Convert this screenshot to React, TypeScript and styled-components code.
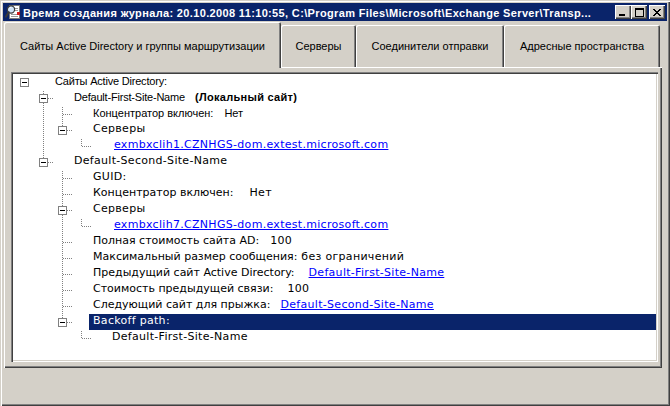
import React from 'react';
import styled, { createGlobalStyle } from 'styled-components';

const GlobalStyle = createGlobalStyle`
  html, body { margin: 0; padding: 0; background: #d4d0c8; }
  body { width: 670px; height: 406px; overflow: hidden; font-family: "Liberation Sans", Arial, sans-serif; }
`;

const Window = styled.div`
  box-sizing: border-box;
  width: 670px;
  height: 406px;
  padding: 3px;
  background: #d4d0c8;
  box-shadow: inset 1px 1px #d4d0c8, inset 2px 2px #ffffff, inset -1px -1px #404040, inset -2px -2px #808080;
  display: flex;
  flex-direction: column;
`;

const TitleBar = styled.div`
  height: 18px;
  flex: none;
  background: #0a246a;
  display: flex;
  align-items: center;
  padding: 0 2px 0 2px;
`;

const TitleIcon = styled.svg`
  flex: none;
  width: 16px;
  height: 16px;
  margin-right: 2px;
`;

const TitleText = styled.div`
  flex: 1;
  min-width: 0;
  color: #ffffff;
  font-family: "Liberation Sans", Arial, sans-serif;
  font-weight: bold;
  font-size: 11px;
  letter-spacing: 0.35px;
  line-height: 14px;
  padding-top: 1px;
  white-space: pre;
  overflow: hidden;
`;

const CaptionButtons = styled.div`
  display: flex;
  flex: none;
  margin-left: 4px;
`;

const CaptionButton = styled.div<{ $gapLeft?: number }>`
  width: 16px;
  height: 14px;
  margin-left: ${(p) => p.$gapLeft ?? 0}px;
  background: #d4d0c8;
  box-shadow: inset 1px 1px #ffffff, inset -1px -1px #404040, inset -2px -2px #808080;
  display: flex;
  align-items: center;
  justify-content: center;
`;

const TabStrip = styled.div`
  height: 46px;
  flex: none;
  display: flex;
  align-items: flex-end;
  padding-left: 1px;
`;

const Tab = styled.div<{ $w: number; $active?: boolean }>`
  box-sizing: border-box;
  width: ${(p) => p.$w}px;
  height: ${(p) => (p.$active ? 46 : 42)}px;
  margin-bottom: ${(p) => (p.$active ? -1 : 0)}px;
  position: relative;
  z-index: ${(p) => (p.$active ? 1 : 0)};
  padding-top: ${(p) => (p.$active ? 17 : 14)}px;
  background: #d4d0c8;
  border-radius: 2px 2px 0 0;
  box-shadow: inset 1px 1px #ffffff, inset -1px 0 #404040, inset -2px 0 #808080;
  font-family: "Liberation Sans", Arial, sans-serif;
  font-size: 11px;
  line-height: 14px;
  color: #000;
  text-align: center;
  white-space: nowrap;
`;

const Panel = styled.div`
  box-sizing: border-box;
  width: 658px;
  height: 301px;
  flex: none;
  margin-left: 1px;
  padding: 5px 4px 5px 7px;
  background: #d4d0c8;
  box-shadow: inset 1px 1px #ffffff, inset -1px -1px #404040, inset -2px -2px #808080;
  display: flex;
`;

const TreeBox = styled.div`
  box-sizing: border-box;
  flex: 1;
  height: 290px;
  background: #ffffff;
  padding: 2px 2px 2px 4px;
  box-shadow: inset 1px 1px #808080, inset 2px 2px #404040, inset -1px -1px #ffffff, inset -2px -2px #d4d0c8;
  display: flex;
  flex-direction: column;
  overflow: hidden;
`;

const Row = styled.div`
  display: flex;
  height: 16px;
  flex: none;
`;

const CellSvg = styled.svg`
  flex: none;
  width: 19px;
  height: 16px;
`;

type Face = 'narrow' | 'plain' | 'wide';

const faces: Record<Face, { family: string; spacing: string }> = {
  narrow: { family: '"Liberation Sans", Arial, sans-serif', spacing: '-0.2px' },
  plain: { family: '"Liberation Sans", Arial, sans-serif', spacing: '0px' },
  wide: { family: '"DejaVu Sans", Verdana, sans-serif', spacing: '0.3px' },
};

const Label = styled.div<{ $selected?: boolean; $face: Face }>`
  flex: 1;
  min-width: 0;
  margin-left: 17px;
  padding: 0 4px;
  height: 16px;
  line-height: 14px;
  white-space: pre;
  font-family: ${(p) => faces[p.$face].family};
  font-size: 11px;
  letter-spacing: ${(p) => faces[p.$face].spacing};
  color: ${(p) => (p.$selected ? '#ffffff' : '#000000')};
  background: ${(p) => (p.$selected ? '#0a246a' : 'transparent')};
`;

const Key = styled.span`
  letter-spacing: 0;
`;

const Value = styled.span<{ $gap: number }>`
  margin-left: ${(p) => p.$gap}px;
`;

const Bold = styled.span`
  margin-left: 10px;
  font-weight: bold;
  letter-spacing: 0.3px;
`;

const Link = styled.span<{ $gap?: number }>`
  margin-left: ${(p) => p.$gap ?? 0}px;
  color: #0000ff;
  text-decoration: underline;
`;

type CellKind = 'none' | 'pipe' | 'tee' | 'elbow';
interface CellSpec {
  kind: CellKind;
  box?: boolean;
}

function dots(points: Array<[number, number]>): string {
  return points.map(([x, y]) => `M${x} ${y}h1v1h-1z`).join('');
}

function TreeCell({ kind, box }: CellSpec) {
  const pts: Array<[number, number]> = [];
  if (kind === 'pipe' || kind === 'tee') {
    for (let y = 1; y < 16; y += 2) pts.push([9, y]);
  }
  if (kind === 'elbow') {
    for (let y = 1; y < 8; y += 2) pts.push([9, y]);
  }
  if (kind === 'tee' || kind === 'elbow') {
    for (let x = box ? 14 : 10; x < 19; x += 2) pts.push([x, 8]);
  }
  return (
    <CellSvg viewBox="0 0 19 16" shapeRendering="crispEdges">
      {pts.length > 0 && <path d={dots(pts)} fill="#808080" />}
      {box && (
        <>
          <rect x="5.5" y="4.5" width="8" height="8" fill="#ffffff" stroke="#808080" strokeWidth="1" />
          <rect x="7" y="8" width="5" height="1" fill="#000000" />
        </>
      )}
    </CellSvg>
  );
}

interface RowSpec {
  cells: CellSpec[];
  face: Face;
  selected?: boolean;
  content: React.ReactNode;
}

const N: CellSpec = { kind: 'none' };
const P: CellSpec = { kind: 'pipe' };
const T: CellSpec = { kind: 'tee' };
const E: CellSpec = { kind: 'elbow' };
const TB: CellSpec = { kind: 'tee', box: true };
const EB: CellSpec = { kind: 'elbow', box: true };
const RB: CellSpec = { kind: 'none', box: true };

const rows: RowSpec[] = [
  { cells: [RB], face: 'narrow', content: 'Сайты Active Directory:' },
  {
    cells: [N, TB],
    face: 'narrow',
    content: (
      <>
        Default-First-Site-Name<Bold>(Локальный сайт)</Bold>
      </>
    ),
  },
  {
    cells: [N, P, T],
    face: 'plain',
    content: (
      <>
        Концентратор включен:<Value $gap={11}>Нет</Value>
      </>
    ),
  },
  { cells: [N, P, EB], face: 'wide', content: 'Серверы' },
  { cells: [N, P, N, E], face: 'wide', content: <Link $gap={2}>exmbxclih1.CZNHGS-dom.extest.microsoft.com</Link> },
  { cells: [N, EB], face: 'wide', content: 'Default-Second-Site-Name' },
  { cells: [N, N, T], face: 'wide', content: 'GUID:' },
  {
    cells: [N, N, T],
    face: 'wide',
    content: (
      <>
        <Key>Концентратор включен:</Key>
        <Value $gap={16}>Нет</Value>
      </>
    ),
  },
  { cells: [N, N, TB], face: 'wide', content: 'Серверы' },
  { cells: [N, N, P, E], face: 'wide', content: <Link $gap={2}>exmbxclih7.CZNHGS-dom.extest.microsoft.com</Link> },
  {
    cells: [N, N, T],
    face: 'wide',
    content: (
      <>
        <Key>Полная стоимость сайта AD:</Key>
        <Value $gap={11}>100</Value>
      </>
    ),
  },
  {
    cells: [N, N, T],
    face: 'wide',
    content: (
      <>
        <Key>Максимальный размер сообщения:</Key>
        <Value $gap={4}>без ограничений</Value>
      </>
    ),
  },
  {
    cells: [N, N, T],
    face: 'wide',
    content: (
      <>
        <Key>Предыдущий сайт Active Directory:</Key>
        <Link $gap={14}>Default-First-Site-Name</Link>
      </>
    ),
  },
  {
    cells: [N, N, T],
    face: 'wide',
    content: (
      <>
        <Key>Стоимость предыдущей связи:</Key>
        <Value $gap={14}>100</Value>
      </>
    ),
  },
  {
    cells: [N, N, T],
    face: 'wide',
    content: (
      <>
        <Key>Следующий сайт для прыжка:</Key>
        <Link $gap={10}>Default-Second-Site-Name</Link>
      </>
    ),
  },
  { cells: [N, N, EB], face: 'wide', selected: true, content: 'Backoff path:' },
  { cells: [N, N, N, E], face: 'wide', content: 'Default-First-Site-Name' },
];

const tabs = [
  { label: 'Сайты Active Directory и группы маршрутизации', w: 277, active: true },
  { label: 'Серверы', w: 75 },
  { label: 'Соединители отправки', w: 148 },
  { label: 'Адресные пространства', w: 156 },
];

function AppIcon() {
  return (
    <TitleIcon viewBox="0 0 16 16" shapeRendering="crispEdges">
      <rect x="4.5" y="1.5" width="10" height="13" fill="#ffffff" stroke="#7a7a7a" />
      <rect x="9" y="4" width="4" height="1" fill="#9a9a9a" />
      <rect x="9" y="6" width="4" height="1" fill="#9a9a9a" />
      <rect x="6" y="10" width="7" height="1" fill="#9a9a9a" />
      <rect x="6" y="12" width="7" height="1" fill="#9a9a9a" />
      <rect x="12" y="8" width="3" height="3" fill="#d01818" />
      <g shapeRendering="geometricPrecision">
        <circle cx="6" cy="5.5" r="3.6" fill="#cfe3f7" stroke="#3a3a3a" strokeWidth="1.2" />
        <path d="M3.6 8.2 L1 12.6" stroke="#3a3a3a" strokeWidth="2" strokeLinecap="round" />
        <path d="M4.6 4.3 a1.8 1.8 0 0 1 1.8 -1" stroke="#ffffff" strokeWidth="0.9" fill="none" />
      </g>
    </TitleIcon>
  );
}

function MinGlyph() {
  return (
    <svg width="8" height="7" viewBox="0 0 8 7" shapeRendering="crispEdges">
      <rect x="0" y="5" width="6" height="2" fill="#000" />
    </svg>
  );
}

function MaxGlyph() {
  return (
    <svg width="9" height="9" viewBox="0 0 9 9" shapeRendering="crispEdges">
      <rect x="0.5" y="0.5" width="8" height="8" fill="none" stroke="#000" />
      <rect x="0" y="1" width="9" height="1" fill="#000" />
    </svg>
  );
}

function CloseGlyph() {
  return (
    <svg width="8" height="7" viewBox="0 0 8 7" shapeRendering="crispEdges">
      <path
        d="M0 0h2v1h-2zM6 0h2v1h-2zM1 1h2v1h-2zM5 1h2v1h-2zM2 2h4v1h-4zM3 3h2v1h-2zM2 4h4v1h-4zM1 5h2v1h-2zM5 5h2v1h-2zM0 6h2v1h-2zM6 6h2v1h-2z"
        fill="#000"
      />
    </svg>
  );
}

export default function App() {
  return (
    <>
      <GlobalStyle />
      <Window>
        <TitleBar>
          <AppIcon />
          <TitleText>
            Время создания журнала: 20.10.2008 11:10:55, C:\Program Files\Microsoft\Exchange Server\Transp...
          </TitleText>
          <CaptionButtons>
            <CaptionButton>
              <MinGlyph />
            </CaptionButton>
            <CaptionButton>
              <MaxGlyph />
            </CaptionButton>
            <CaptionButton $gapLeft={2}>
              <CloseGlyph />
            </CaptionButton>
          </CaptionButtons>
        </TitleBar>
        <TabStrip>
          {tabs.map((t) => (
            <Tab key={t.label} $w={t.w} $active={t.active}>
              {t.label}
            </Tab>
          ))}
        </TabStrip>
        <Panel>
          <TreeBox>
            {rows.map((r, i) => (
              <Row key={i}>
                {r.cells.map((c, j) => (
                  <TreeCell key={j} kind={c.kind} box={c.box} />
                ))}
                <Label $face={r.face} $selected={r.selected}>
                  {r.content}
                </Label>
              </Row>
            ))}
          </TreeBox>
        </Panel>
      </Window>
    </>
  );
}
